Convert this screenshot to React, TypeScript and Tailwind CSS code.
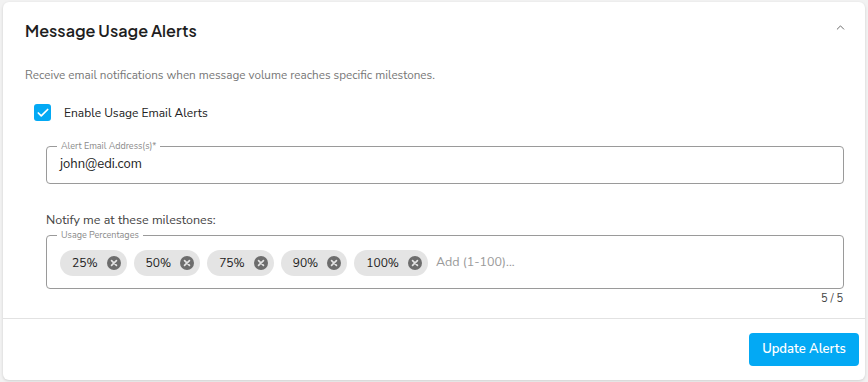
import { ChevronUp, Check } from 'lucide-react';

const milestones = ['25%', '50%', '75%', '90%', '100%'];

function ChipX() {
    return (
        <svg viewBox="0 0 16 16" className="w-[14px] h-[14px]">
            <circle cx="8" cy="8" r="8" fill="#6d6d6d" />
            <path d="M5.2 5.2 10.8 10.8M10.8 5.2 5.2 10.8" stroke="#e4e4e4" strokeWidth="1.9" strokeLinecap="round" />
        </svg>
    );
}

export default function App() {
    return (
        <div className="w-[868px] h-[382px] bg-[#f2f2f2] p-[2px] pl-[3px] pr-[3px]" style={{ fontFamily: '"Nunito Sans", Lato, "Open Sans", sans-serif' }}>
            <div className="h-[378px] bg-white rounded-md shadow-[0_1px_3px_rgba(0,0,0,0.15)] flex flex-col">
                <div className="flex items-center justify-between pl-[22px] pr-[18px] pt-[10px] h-[48px]">
                    <h2 className="text-[16.2px] font-semibold text-[#1e1e1e]" style={{ fontFamily: '"Plus Jakarta Sans", Inter, sans-serif' }}>
                        Message Usage Alerts
                    </h2>
                    <ChevronUp className="w-[13px] h-[13px] text-[#555] -mt-[7px]" strokeWidth={1.6} />
                </div>

                <div className="pl-[22px] pr-[21px] pt-[17px]">
                    <p className="text-[11.7px] text-[#777]">Receive email notifications when message volume reaches specific milestones.</p>

                    <label className="flex items-center mt-[19px] ml-[9px]">
                        <span className="w-[17px] h-[17px] rounded-[3px] bg-[#03a9f4] flex items-center justify-center">
                            <Check className="w-[14px] h-[14px] text-white" strokeWidth={3} />
                        </span>
                        <span className="ml-[13px] text-[12px] text-[#222]">Enable Usage Email Alerts</span>
                    </label>

                    <div className="ml-[21px] mt-[24px] relative border border-[#9a9a9a] rounded-[4px] h-[38px] flex items-center px-[13px]">
                        <span className="absolute -top-[7px] left-[10px] bg-white px-[4px] text-[9px] leading-[12px] text-[#8a8a8a]">
                            Alert Email Address(s)*
                        </span>
                        <span className="text-[13px] text-[#222] mt-[1px]">john@edi.com</span>
                    </div>

                    <p className="ml-[21px] mt-[27px] text-[12.5px] text-[#444]">Notify me at these milestones:</p>

                    <div className="ml-[21px] mt-[6px] relative border border-[#9a9a9a] rounded-[4px] h-[54px] flex items-center gap-[7px] px-[13px] pt-[1px]">
                        <span className="absolute -top-[7px] left-[10px] bg-white px-[4px] text-[9px] leading-[12px] text-[#8a8a8a]">
                            Usage Percentages
                        </span>
                        {milestones.map((m) => (
                            <span key={m} className="h-[26px] rounded-full bg-[#e4e4e4] flex items-center gap-[9px] pl-[12px] pr-[6px] text-[12px] text-[#222]">
                                {m}
                                <ChipX />
                            </span>
                        ))}
                        <span className="text-[12.5px] text-[#9a9a9a] ml-[1px]">Add (1-100)...</span>
                    </div>

                    <div className="text-right text-[11px] text-[#444] mt-[2px] pr-[1px]">5 / 5</div>
                </div>

                <div className="mt-[10px] border-t border-[#e2e2e2] flex justify-end pt-[14px] pr-[6px]">
                    <button className="w-[110px] h-[33px] rounded-[4px] bg-[#03a9f4] text-white text-[13px] font-semibold">
                        Update Alerts
                    </button>
                </div>
            </div>
        </div>
    );
}
